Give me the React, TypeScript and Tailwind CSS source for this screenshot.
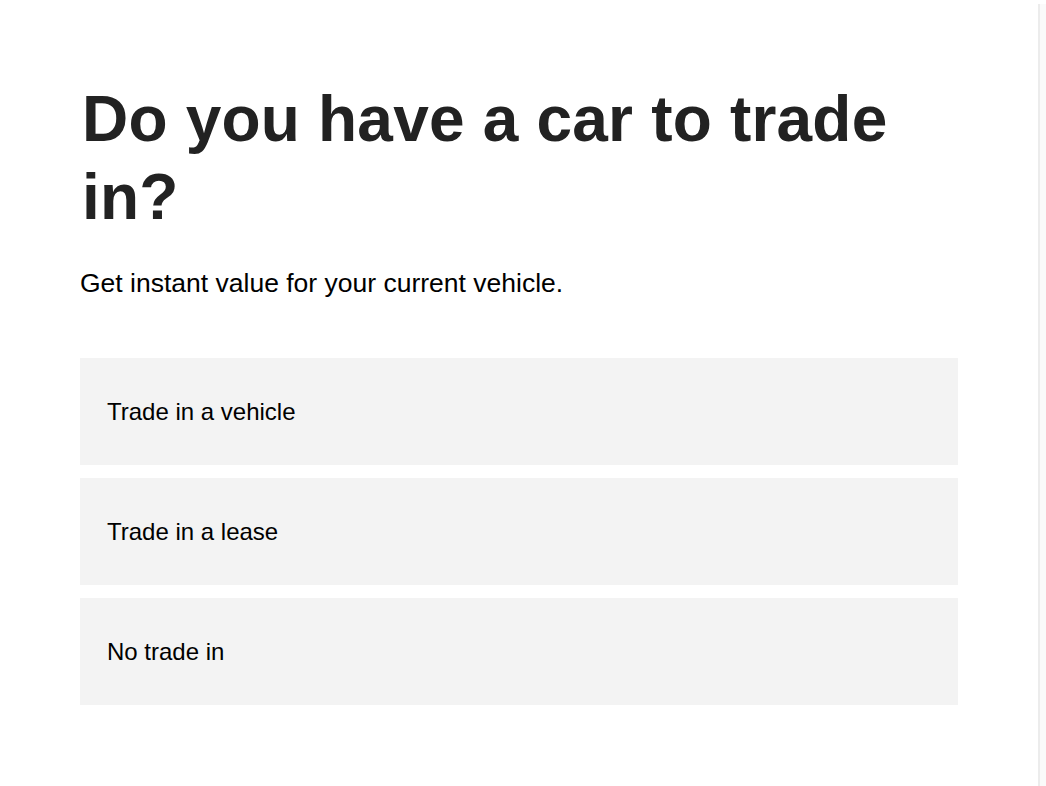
const options = ["Trade in a vehicle", "Trade in a lease", "No trade in"];

export default function App() {
  return (
    <div className="flex h-[786px] w-[1046px] overflow-hidden bg-white font-['Liberation_Sans',Arial,sans-serif]">
      <main className="flex-1 pl-[80px] pr-[80px] pt-[80px]">
        <h1 className="pl-[2px] text-[64px] font-bold leading-[78px] tracking-[0.2px] text-[#222]">
          Do you have a car to trade in?
        </h1>
        <p className="mt-[31px] text-[26.5px] leading-[32px] text-black">
          Get instant value for your current vehicle.
        </p>
        <div className="mt-[59px] flex w-[878px] flex-col gap-[13px]">
          {options.map((o) => (
            <button
              key={o}
              className="flex h-[107px] items-center bg-[#f3f3f3] px-[27px] text-left text-[24px] text-black"
            >
              {o}
            </button>
          ))}
        </div>
      </main>
      <div className="mt-[4px] w-[8px] border-l-2 border-[#ececec] bg-[#fafafa]" />
    </div>
  );
}
